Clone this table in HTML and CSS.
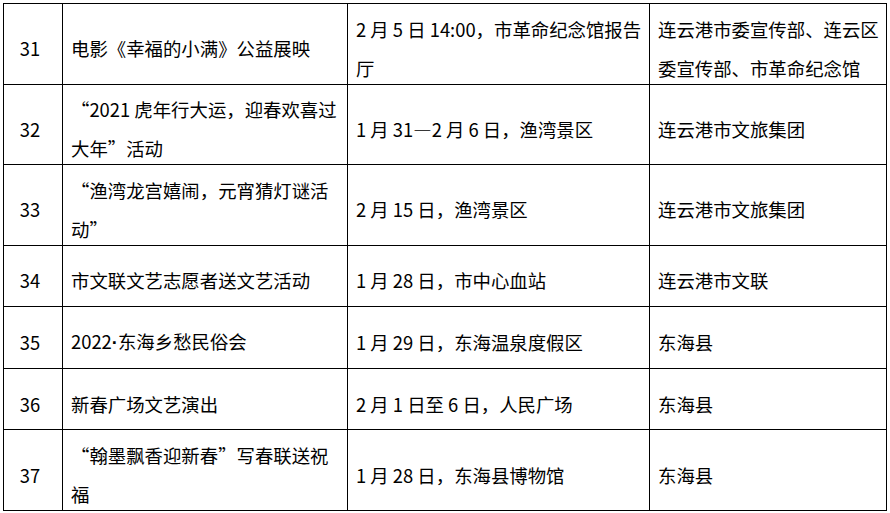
FILE: index.html
```html
<!DOCTYPE html>
<html lang="zh-CN">
<head>
<meta charset="utf-8">
<title>活动表</title>
<link rel="stylesheet" href="styles.css">
</head>
<body>
<div class="page">
<table class="events">
<colgroup>
<col class="c-no">
<col class="c-name">
<col class="c-time">
<col class="c-org">
</colgroup>
<tbody>
<tr class="tall">
<td class="no"><div class="t">31</div></td>
<td><div class="t">电影《幸福的小满》公益展映</div></td>
<td><div class="t">2 月 5 日 14:00，市革命纪念馆报告厅</div></td>
<td><div class="t">连云港市委宣传部、连云区委宣传部、市革命纪念馆</div></td>
</tr>
<tr class="tall">
<td class="no"><div class="t">32</div></td>
<td><div class="t">“2021 虎年行大运，迎春欢喜过大年”活动</div></td>
<td><div class="t">1 月 31—2 月 6 日，渔湾景区</div></td>
<td><div class="t">连云港市文旅集团</div></td>
</tr>
<tr class="tall">
<td class="no"><div class="t">33</div></td>
<td><div class="t">“渔湾龙宫嬉闹，元宵猜灯谜活动”</div></td>
<td><div class="t">2 月 15 日，渔湾景区</div></td>
<td><div class="t">连云港市文旅集团</div></td>
</tr>
<tr class="short">
<td class="no"><div class="t">34</div></td>
<td><div class="t">市文联文艺志愿者送文艺活动</div></td>
<td><div class="t">1 月 28 日，市中心血站</div></td>
<td><div class="t">连云港市文联</div></td>
</tr>
<tr class="short">
<td class="no"><div class="t">35</div></td>
<td><div class="t">2022<span class="dot">·</span>东海乡愁民俗会</div></td>
<td><div class="t">1 月 29 日，东海温泉度假区</div></td>
<td><div class="t">东海县</div></td>
</tr>
<tr class="short">
<td class="no"><div class="t">36</div></td>
<td><div class="t">新春广场文艺演出</div></td>
<td><div class="t">2 月 1 日至 6 日，人民广场</div></td>
<td><div class="t">东海县</div></td>
</tr>
<tr class="tall">
<td class="no"><div class="t">37</div></td>
<td><div class="t">“翰墨飘香迎新春”写春联送祝福</div></td>
<td><div class="t">1 月 28 日，东海县博物馆</div></td>
<td><div class="t">东海县</div></td>
</tr>
</tbody>
</table>
</div>
</body>
</html>
```
FILE: styles.css
```css
html, body {
  margin: 0;
  padding: 0;
  background: #fff;
}
.page {
  padding: 3px 0 0 3px;
}
.events {
  border-collapse: collapse;
  table-layout: fixed;
  width: 883px;
  font-family: "Noto Sans CJK SC", "Noto Sans", sans-serif;
  font-size: 18.4px;
  line-height: 39px;
  color: #000;
}
.c-no { width: 59px; }
.c-name { width: 285px; }
.c-time { width: 302px; }
.c-org { width: 237px; }
.events td {
  border: 1px solid #000;
  padding: 0 3px 0 8px;
  vertical-align: middle;
  text-align: left;
}
.events td.no {
  text-align: center;
  padding: 0 6px 0 0;
}
.tall { height: 80.5px; }
.short { height: 61.67px; }
.t {
  margin-top: 5px;
  margin-bottom: -5px;
}
.dot {
  font-family: "Liberation Sans", sans-serif;
  font-weight: bold;
}
```
